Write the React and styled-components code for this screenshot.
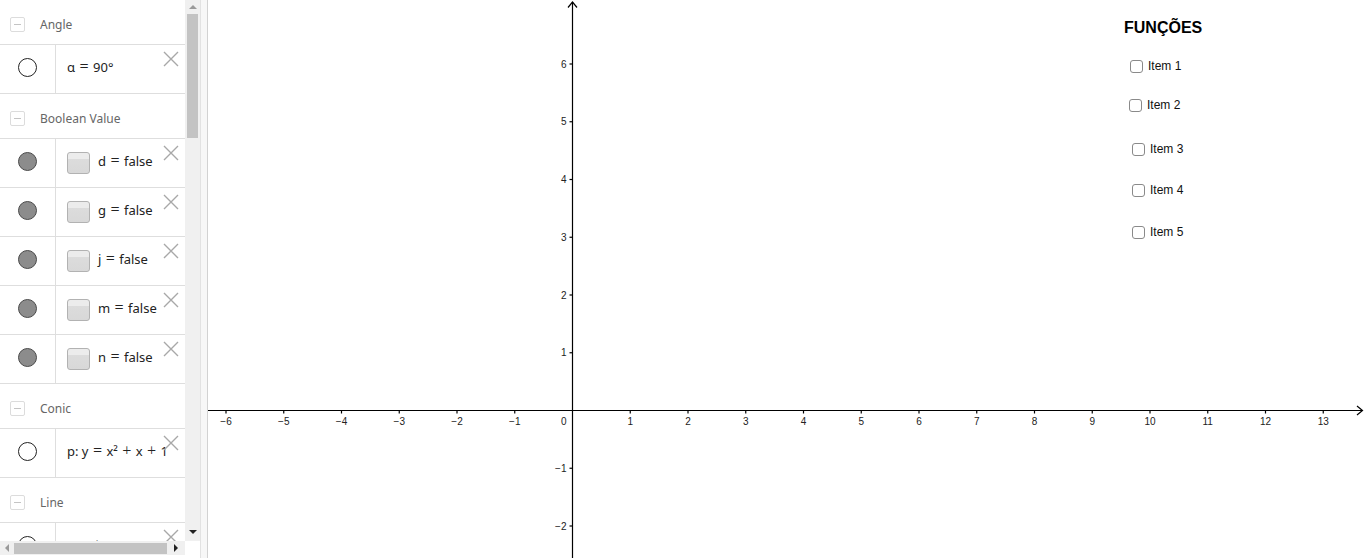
import React from 'react'
import styled, { createGlobalStyle } from 'styled-components'

const GlobalStyle = createGlobalStyle`
  html, body {
    margin: 0;
    padding: 0;
    height: 100%;
    overflow: hidden;
    background: #fff;
    font-family: "Noto Sans", "Open Sans", sans-serif;
  }
`

const Page = styled.div`
  display: flex;
  flex-direction: row;
  width: 100vw;
  height: 100vh;
  background: #fff;
`

const Sidebar = styled.div`
  width: 200px;
  display: flex;
  flex-direction: column;
  flex-shrink: 0;
`

const SideTop = styled.div`
  display: flex;
  flex-direction: row;
  height: 541px;
`

const List = styled.div`
  width: 185px;
  overflow: hidden;
`

const Header = styled.div`
  height: 40px;
  padding-top: 4px;
  display: flex;
  align-items: center;
  border-bottom: 1px solid #dedede;
`

const MinusBox = styled.div`
  width: 13px;
  height: 13px;
  margin-left: 10px;
  border: 1px solid #dcdcdc;
  border-radius: 2px;
  display: flex;
  align-items: center;
  justify-content: center;
  &::after {
    content: '';
    width: 7px;
    height: 1px;
    background: #c4c4c4;
  }
`

const HeaderText = styled.span`
  margin-left: 15px;
  font-size: 12px;
  color: #666;
`

const Row = styled.div`
  position: relative;
  height: 48px;
  display: flex;
  flex-direction: row;
  border-bottom: 1px solid #dedede;
`

const MarbleCell = styled.div`
  width: 56px;
  border-right: 1px solid #dedede;
  display: flex;
  align-items: center;
  justify-content: center;
  padding-bottom: 4px;
  box-sizing: border-box;
`

const Marble = styled.div`
  width: 17px;
  height: 17px;
  border-radius: 50%;
  border: 1px solid ${p => (p.$on ? '#4a4a4a' : '#222')};
  background: ${p => (p.$on ? '#8c8c8c' : '#fff')};
`

const Content = styled.div`
  flex: 1;
  display: flex;
  align-items: center;
  padding-left: 11px;
  padding-bottom: 4px;
  overflow: hidden;
  white-space: nowrap;
`

const BoolBox = styled.div`
  width: 21px;
  height: 20px;
  margin-top: 4px;
  margin-right: 8px;
  border: 1px solid #b2b2b2;
  border-radius: 3px;
  background: linear-gradient(to bottom, #ececec 0, #ececec 30%, #dcdcdc 30%, #d8d8d8 100%);
  flex-shrink: 0;
`

const MathText = styled.span`
  font-size: 13px;
  color: #222;
`

const Op = styled.span`
  font-size: 16px;
  line-height: 1;
  margin: 0 1px;
  font-weight: 300;
`

const DeleteBtn = styled.svg`
  position: absolute;
  top: 6px;
  right: 6px;
  width: 16px;
  height: 16px;
`

const VScroll = styled.div`
  width: 15px;
  background: #f0f0f0;
  display: flex;
  flex-direction: column;
  align-items: center;
`

const ArrowArea = styled.div`
  height: ${p => p.$h}px;
  display: flex;
  align-items: center;
  justify-content: center;
  flex-shrink: 0;
`

const TriUp = styled.div`
  width: 0;
  height: 0;
  border-left: 4px solid transparent;
  border-right: 4px solid transparent;
  border-bottom: 4px solid ${p => p.$c};
`

const TriDown = styled.div`
  width: 0;
  height: 0;
  border-left: 4px solid transparent;
  border-right: 4px solid transparent;
  border-top: 4px solid ${p => p.$c};
`

const TriLeft = styled.div`
  width: 0;
  height: 0;
  border-top: 4px solid transparent;
  border-bottom: 4px solid transparent;
  border-right: 4px solid ${p => p.$c};
`

const TriRight = styled.div`
  width: 0;
  height: 0;
  border-top: 4px solid transparent;
  border-bottom: 4px solid transparent;
  border-left: 4px solid ${p => p.$c};
`

const VThumb = styled.div`
  width: 11px;
  height: 124px;
  background: #c3c3c3;
  flex-shrink: 0;
`

const Spacer = styled.div`
  flex: 1;
`

const HScroll = styled.div`
  width: 185px;
  height: 14px;
  background: #f0f0f0;
  display: flex;
  flex-direction: row;
  align-items: center;
`

const HArrow = styled.div`
  width: ${p => p.$w}px;
  height: 14px;
  display: flex;
  align-items: center;
  justify-content: center;
  flex-shrink: 0;
`

const HThumb = styled.div`
  width: 153px;
  height: 11px;
  background: #c3c3c3;
`

const Divider = styled.div`
  width: 6px;
  flex-shrink: 0;
  border-left: 1px solid #e2e2e2;
  border-right: 1px solid #d2d2d2;
  background: #f7f7f7;
`

const Graph = styled.div`
  position: relative;
  flex: 1;
  overflow: hidden;
`

const Title = styled.div`
  position: absolute;
  left: 916px;
  top: 19px;
  font-family: "Liberation Sans", Arial, sans-serif;
  font-weight: bold;
  font-size: 16px;
  line-height: 18px;
  color: #000;
`

const CanvasCheck = styled.label`
  position: absolute;
  left: ${p => p.$x}px;
  top: ${p => p.$y}px;
  display: flex;
  align-items: center;
  height: 14px;
  font-family: "Liberation Sans", Arial, sans-serif;
  font-size: 12px;
  color: #111;
`

const CheckSquare = styled.span`
  width: 11px;
  height: 11px;
  border: 1px solid #8a8a8a;
  border-radius: 3px;
  background: #fff;
  margin-right: 5px;
`

const sections = [
  { name: 'Angle', rows: [{ text: 'α = 90°' }] },
  {
    name: 'Boolean Value',
    rows: ['d', 'g', 'j', 'm', 'n'].map(v => ({ text: `${v} = false`, on: true, bool: true })),
  },
  { name: 'Conic', rows: [{ text: 'p: y = x² + x + 1' }] },
  { name: 'Line', rows: [{ text: 'a: x + y = 1' }] },
]

const items = [
  { label: 'Item 1', x: 922, y: 59 },
  { label: 'Item 2', x: 921, y: 98 },
  { label: 'Item 3', x: 924, y: 142 },
  { label: 'Item 4', x: 924, y: 183 },
  { label: 'Item 5', x: 924, y: 225 },
]

// operators are drawn a bit larger, like the algebra view's math rendering
function renderMath(text) {
  return text.split(/([=+])/).map((part, i) =>
    part === '=' || part === '+' ? <Op key={i}>{part}</Op> : <React.Fragment key={i}>{part}</React.Fragment>
  )
}

const unit = 57.75
const ox = 364.5
const oy = 410.5

function Axes() {
  const xs = []
  for (let i = -6; i <= 13; i++) if (i !== 0) xs.push(i)
  const ys = []
  for (let i = -2; i <= 6; i++) if (i !== 0) ys.push(i)
  const lbl = n => (n < 0 ? `\u2212${-n}` : `${n}`)
  return (
    <svg width="1158" height="558" style={{ display: 'block' }}>
      <g stroke="#000" strokeWidth="1.2" fill="none">
        <line x1="0" y1={oy} x2="1154" y2={oy} />
        <polyline points={`1149,${oy - 4.5} 1154.5,${oy} 1149,${oy + 4.5}`} />
        <line x1={ox} y1="2" x2={ox} y2="558" />
        <polyline points={`${ox - 4.5},7.5 ${ox},2 ${ox + 4.5},7.5`} />
        {xs.map(i => (
          <line key={'xt' + i} x1={ox + i * unit} y1={oy} x2={ox + i * unit} y2={oy + 3} />
        ))}
        {ys.map(i => (
          <line key={'yt' + i} x1={ox - 3} y1={oy - i * unit} x2={ox} y2={oy - i * unit} />
        ))}
      </g>
      <g fontFamily="Liberation Sans, Arial, sans-serif" fontSize="10" fill="#222">
        {xs.map(i => (
          <text key={'xl' + i} x={ox + i * unit} y={oy + 14.5} textAnchor="middle">
            {lbl(i)}
          </text>
        ))}
        <text x={ox - 6} y={oy + 14.5} textAnchor="end">0</text>
        {ys.map(i => (
          <text key={'yl' + i} x={ox - 6} y={oy - i * unit + 3.5} textAnchor="end">
            {lbl(i)}
          </text>
        ))}
      </g>
    </svg>
  )
}

export default function App() {
  return (
    <>
      <GlobalStyle />
      <Page>
        <Sidebar>
          <SideTop>
            <List>
              {sections.map(s => (
                <React.Fragment key={s.name}>
                  <Header>
                    <MinusBox />
                    <HeaderText>{s.name}</HeaderText>
                  </Header>
                  {s.rows.map(r => (
                    <Row key={r.text}>
                      <MarbleCell>
                        <Marble $on={r.on} />
                      </MarbleCell>
                      <Content>
                        {r.bool && <BoolBox />}
                        <MathText>{renderMath(r.text)}</MathText>
                      </Content>
                      <DeleteBtn viewBox="0 0 16 16">
                        <path d="M1 1 L15 15 M15 1 L1 15" stroke="#a8a8a8" strokeWidth="1.4" fill="none" />
                      </DeleteBtn>
                    </Row>
                  ))}
                </React.Fragment>
              ))}
            </List>
            <VScroll>
              <ArrowArea $h={14}>
                <TriUp $c="#9a9a9a" />
              </ArrowArea>
              <VThumb />
              <Spacer />
              <ArrowArea $h={18}>
                <TriDown $c="#222" />
              </ArrowArea>
            </VScroll>
          </SideTop>
          <HScroll>
            <HArrow $w={14}>
              <TriLeft $c="#9a9a9a" />
            </HArrow>
            <HThumb />
            <Spacer />
            <HArrow $w={18}>
              <TriRight $c="#222" />
            </HArrow>
          </HScroll>
        </Sidebar>
        <Divider />
        <Graph>
          <Axes />
          <Title>FUNÇÕES</Title>
          {items.map(it => (
            <CanvasCheck key={it.label} $x={it.x} $y={it.y}>
              <CheckSquare />
              {it.label}
            </CanvasCheck>
          ))}
        </Graph>
      </Page>
    </>
  )
}
